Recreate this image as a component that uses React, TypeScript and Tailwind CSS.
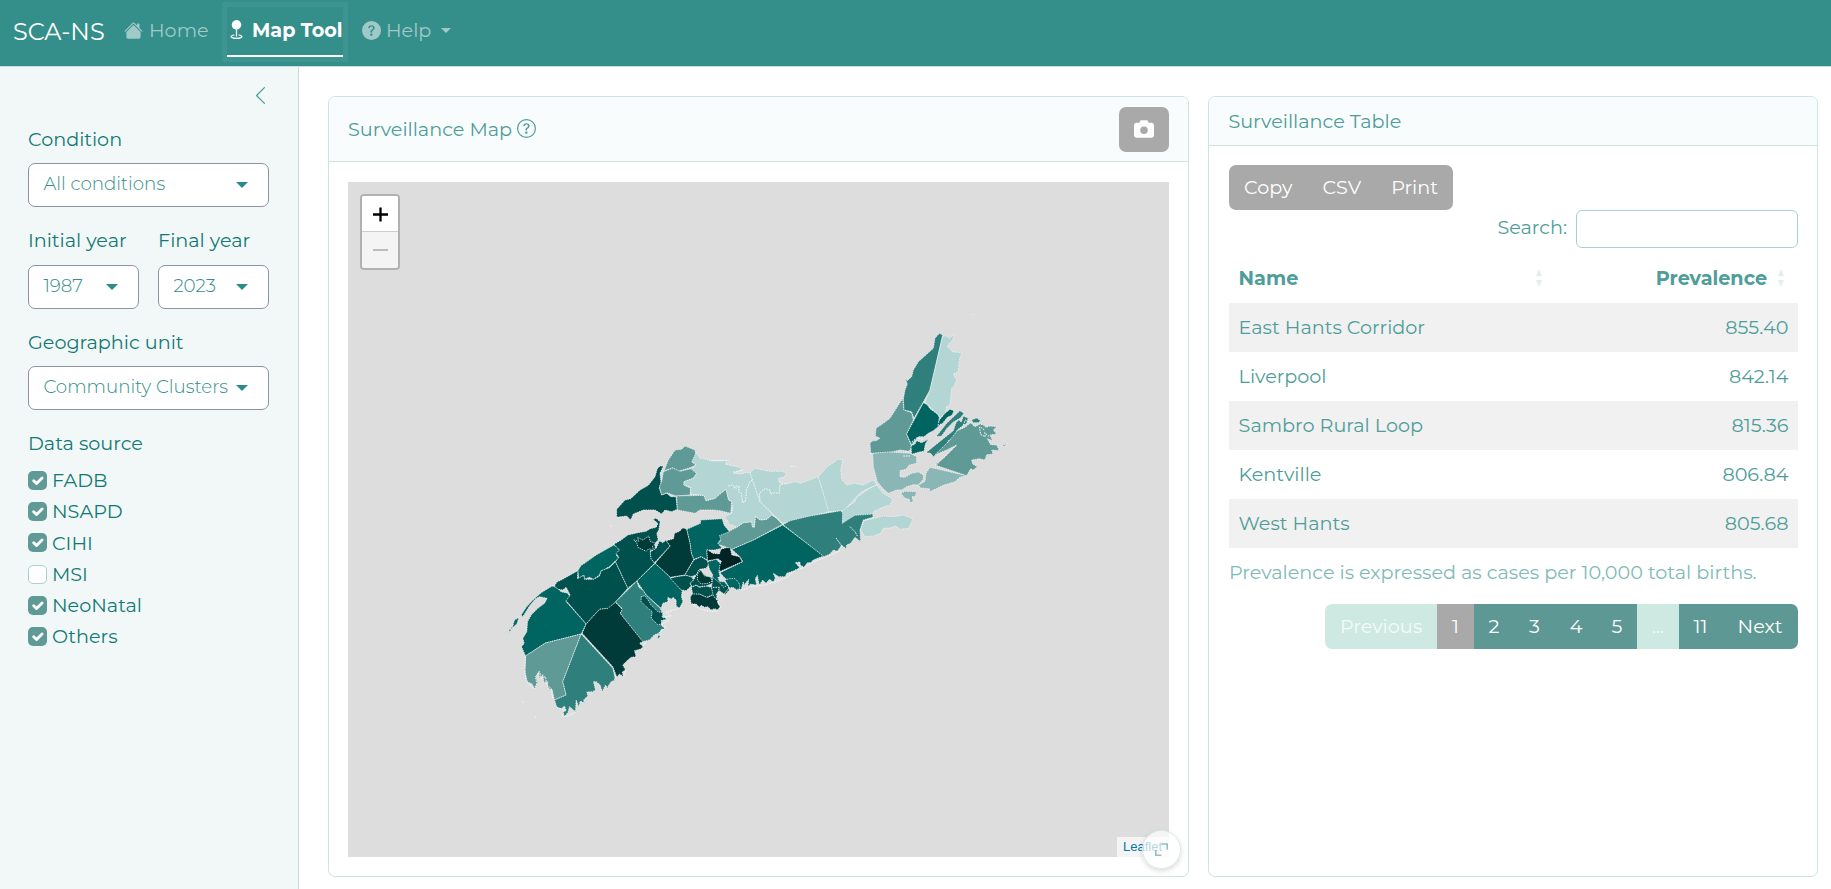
import React from "react";
import { BsHouseFill, BsGeoFill, BsQuestionCircleFill, BsQuestionCircle, BsChevronLeft } from "react-icons/bs";
import { FaCamera } from "react-icons/fa6";

type Shape = [string, string];

const C1 = "#b3d5d3";
const C2 = "#8ab6b5";
const C3 = "#5f9a97";
const C4 = "#2f7f7c";
const C5 = "#006461";
const C6 = "#00504d";
const C7 = "#003b39";
const C8 = "#002424";

const north: Shape[] = [
  [C5, "548,285 672,378 655,384 640,390 632,398 622,398 612,412 600,404 600,396 586,398 598,412 590,420 578,424 560,430 556,440 536,440 520,430 526,444 520,456 508,448 498,460 488,450 478,466 472,436 466,446 470,466 452,462 444,470 446,448 432,466 430,455 424,478 412,480 404,470 396,474 392,455 375,445 360,428 428,395 420,380 395,358 460,330"],
  [C3, "548,283 460,330 395,358 380,352 352,342 362,332 356,320 368,308 385,305 410,292 430,278 455,275 457,290 463,292 466,258 480,270 500,268 515,255 530,264"],
  [C6, "50,262 50,238 75,210 92,206 120,180 145,166 165,140 172,116 180,108 190,108 180,130 183,160 178,175 185,195 200,190 212,200 228,200 232,238 215,245 195,240 185,252 165,240 130,240 100,252 92,270 80,258"],
  [C3, "192,122 205,90 225,60 245,58 255,48 270,54 285,60 288,75 276,95 288,105 268,114 235,124 218,114"],
  [C3, "190,125 218,114 240,124 278,115 290,130 280,145 252,155 252,165 272,175 270,195 228,198 200,188 185,195 178,170 185,155"],
  [C3, "230,198 312,196 318,212 345,205 360,190 378,178 386,210 395,215 392,250 360,242 340,240 300,240 285,250 232,240"],
  [C1, "288,68 300,85 310,85 330,92 385,92 375,102 400,108 420,112 425,118 400,130 425,132 436,128 450,128 460,155 480,215 548,283 530,264 515,255 500,268 480,270 466,258 463,292 457,290 455,275 430,278 410,292 395,284 388,285 382,270 372,262 395,250 398,238 395,215 386,210 378,178 345,205 318,212 312,196 272,192 272,172 252,165 252,155 280,145 290,130 275,118 288,105 276,95"],
  [C1, "450,128 458,120 465,115 510,124 545,124 558,128 555,140 535,145 538,158 560,162 585,155 600,160 655,140 688,245 548,280 480,215"],
  [C1, "655,140 682,110 715,88 728,90 722,120 726,150 740,165 760,160 790,165 820,150 830,165 805,175 785,185 770,200 730,243 686,245"],
  [C1, "830,165 850,190 870,202 878,208 870,225 848,232 820,245 820,258 790,256 760,260 740,272 730,280 725,243 765,215 770,202 805,178"],
  [C4, "549,284 570,272 630,258 723,242 728,250 727,280 745,268 765,256 820,252 818,262 790,270 780,300 782,335 765,322 752,340 740,345 738,356 725,346 712,364 700,360 690,372 672,380"],
  [C1, "782,300 792,272 850,258 880,260 910,255 938,266 934,280 925,295 900,298 888,288 870,294 850,295 842,310 820,318 795,320"],
];

const south: Shape[] = [
  [C5, "28,392 40,378 45,360 56,354 60,348 52,372 35,386 30,398"],
  [C5, "158,258 170,262 185,275 205,280 212,292 200,305 260,372 245,402 138,429 78,468 66,440 74,430 70,415 82,395 84,365 95,345 115,325 135,310 143,295 120,290 108,296 90,318 70,350 65,345 80,322 100,300 125,278"],
  [C5, "235,212 245,196 255,190 290,165 343,135 352,140 360,150 350,165 358,175 345,185 330,200 322,204 315,210 305,212 300,225 282,238 270,232 255,238 253,225 238,236"],
  [C6, "165,258 172,246 185,240 235,212 234,236 253,226 255,238 282,238 300,228 305,212 330,203 348,185 385,265 348,306 330,325 300,328 260,372 200,302 212,285 200,262 190,270 175,268"],
  [C6, "343,133 365,120 385,105 415,98 440,94 452,86 470,82 475,70 460,58 470,55 482,65 478,90 472,100 476,120 466,130 468,150 452,152 455,175 465,190 412,243 385,265 348,185 358,172 350,160 360,150"],
  [C7, "403,120 418,124 414,112 430,120 448,108 452,124 468,130 458,140 464,152 448,146 440,154 415,142 412,128"],
  [C6, "452,156 470,145 480,122 490,128 500,120 512,138 465,188 455,178"],
  [C7, "512,138 500,122 522,116 525,100 540,94 550,83 562,88 572,130 576,160 583,178 556,225 512,232 467,190"],
  [C5, "562,88 603,70 603,60 668,56 674,76 690,95 660,107 664,118 655,130 668,145 645,150 622,150 624,180 605,170 583,178 576,160 572,130"],
  [C8, "622,148 640,160 660,162 664,148 680,143 692,143 697,165 720,170 728,185 660,215 657,200 666,184 655,176 640,180 624,182"],
  [C6, "583,180 605,170 624,182 630,190 620,205 600,208 590,225 575,230 556,225"],
  [C5, "467,190 512,232 548,272 546,290 550,305 540,325 530,318 530,300 520,292 516,298 505,292 505,305 490,310 485,325 440,285 412,243"],
  [C6, "512,235 530,230 560,226 578,232 582,240 572,250 575,258 560,272 545,270"],
  [C4, "412,243 418,262 430,270 440,285 482,325 490,340 485,375 498,388 486,388 478,402 465,404 450,420 428,425 362,340 368,325 348,306"],
  [C6, "425,290 436,287 446,300 455,315 475,335 490,338 488,352 506,356 484,362 488,372 475,374 455,355 458,335 440,320 425,305"],
  [C7, "248,400 260,372 300,328 325,325 348,307 368,328 362,340 430,425 420,430 432,440 422,448 405,452 410,470 395,472 385,480 370,495 378,510 368,516 372,530 360,522 352,532 340,500"],
  [C3, "78,468 138,429 245,402 190,545 200,585 165,600 158,570 150,568 144,558 145,545 134,548 130,524 120,535 118,515 110,530 115,548 105,568 98,552 82,545 76,510"],
  [C4, "245,402 340,505 348,540 335,545 325,560 326,568 318,555 308,575 302,555 290,545 282,545 288,570 280,575 262,576 265,588 252,600 256,608 242,604 238,622 230,600 228,635 210,620 206,636 195,650 190,635 200,632 195,618 185,626 172,622 165,600 200,585 190,545"],
  [C7, "572,292 580,280 600,282 625,292 640,284 655,300 655,310 662,320 655,330 645,326 635,330 625,320 615,322 605,316 600,322 590,312 575,312"],
  [C6, "575,262 590,256 600,262 620,258 635,262 640,274 655,285 640,284 622,292 600,282 580,282"],
  [C6, "590,225 600,208 612,222 625,232 640,232 640,250 620,258 600,260 590,255 578,260 572,250 582,240"],
  [C7, "594,222 604,210 615,228 630,230 640,242 625,250 605,252 594,240"],
  [C5, "624,185 650,178 662,190 658,215 662,230 655,232 660,244 676,246 690,265 680,280 664,268 652,270 645,245 636,240 640,225 630,208"],
  [C6, "640,232 660,248 672,262 684,256 690,270 676,284 660,272 650,282 655,298 642,290 636,262"],
  [C5, "676,240 690,236 706,236 718,248 722,262 712,270 700,262 690,264"],
  [C4, "474,408 480,404 482,412 474,416"],
];

const breton: Shape[] = [
  [C2, "68,430 110,425 180,430 200,440 200,460 178,465 168,478 150,482 150,500 165,502 185,490 205,486 220,495 220,508 205,525 190,524 170,530 155,540 140,540 115,550 98,535 82,515 70,470"],
  [C2, "152,550 165,544 200,545 195,560 186,560 190,575 180,578 178,568 165,565"],
  [C2, "205,526 225,514 228,490 240,472 350,497 330,502 315,515 280,526 240,545 238,536 212,534"],
  [C3, "62,430 60,400 68,392 78,392 90,385 76,378 78,355 100,340 120,325 158,265 162,300 185,308 190,330 170,372 185,410 178,424 150,420 130,425"],
  [C4, "160,268 165,240 172,222 166,206 172,212 185,200 190,180 205,155 250,115 255,85 268,70 278,75 240,240 192,325 185,305 162,300"],
  [C1, "278,78 290,78 298,85 312,73 308,90 298,100 292,110 300,115 306,125 335,128 328,150 325,185 310,192 320,210 312,230 305,235 300,285 290,290 286,308 272,322 225,275 240,240"],
  [C5, "220,278 232,284 240,296 262,312 268,322 266,335 270,345 250,362 235,370 222,380 205,380 190,396 185,405 170,372"],
  [C5, "183,408 195,402 200,392 215,398 235,388 226,402 222,424 208,426 185,433"],
  [C5, "264,346 268,330 285,310 300,298 312,302 306,316 292,322 278,340"],
  [C4, "258,380 290,340 330,302 342,310 330,325 310,336 290,356 275,378"],
  [C4, "228,428 260,402 310,362 318,338 326,330 334,336 340,318 355,325 350,340 340,346 322,360 310,385 295,392 290,402 270,425 250,440 242,430"],
  [C4, "364,330 380,324 392,332 385,338 370,338"],
  [C3, "255,465 285,440 320,405 290,420 255,434 275,415 298,392 322,362 345,352 362,338 375,350 390,342 400,345 408,352 420,348 440,350 430,360 440,372 420,375 428,392 412,386 422,404 440,405 448,422 425,420 430,432 410,434 405,450 388,446 365,450 368,462 382,470 370,480 362,476 350,497"],
  [C3, "455,406 472,402 462,409"],
  [C1, "368,14 376,16 370,22"],
];

const southCoast =
  "M78,470 76,520 84,548 104,566 112,552 108,530 120,515 126,535 138,530 142,555 156,566 160,598 M172,622 194,630 188,648 200,650 230,636 M345,540 350,528 M372,530 380,508 M430,440 436,428 M470,404 488,392 500,382 484,372 508,362 495,350 515,348 500,336 530,328 545,322 M578,312 600,326 620,332 650,334 664,322 650,296 660,284 M640,262 660,262 656,276 672,284 690,262 M108,650 110,656 M70,604 72,610 M333,78 337,79";

const northCoast =
  "M335,92 H385 M400,126 430,120 M572,109 H590 M411,166 398,176 M385,168 398,165 408,175 418,168 416,185 424,190 428,218 436,215 440,178 450,155 458,150 M480,212 478,190 495,176 510,180 512,192 525,188 538,190 540,165 556,160 M400,474 430,480 450,470 490,466 525,456 565,440 585,420 610,414 632,400 660,388 690,376 720,362 M708,324 728,352 M750,290 765,305 772,318";

const bretonCoast =
  "M160,438 H180 M185,396 200,384 222,388 M388,350 392,374 406,380 404,368 418,380 M392,352 404,360 M258,466 320,404 M340,346 346,330 362,338";

function Region({ x, y, shapes, coast }: { x: number; y: number; shapes: Shape[]; coast: string }) {
  return (
    <g transform={`translate(${x} ${y}) scale(0.33333)`}>
      {shapes.map(([fill, pts], i) => (
        <polygon key={i} points={pts} fill={fill} stroke="#f4f8f8" strokeOpacity="0.85" strokeWidth="2.8" strokeDasharray="4 3" />
      ))}
      <path d={coast} fill="none" stroke="#f4f8f8" strokeWidth="3" strokeDasharray="5 3" />
    </g>
  );
}

function NovaScotia() {
  return (
    <svg viewBox="0 0 821 675" className="block h-full w-full">
      <Region x={252} y={248} shapes={north} coast={northCoast} />
      <Region x={151.5} y={318} shapes={south} coast={southCoast} />
      <Region x={502} y={128} shapes={breton} coast={bretonCoast} />
    </svg>
  );
}

function Select({ value }: { value: string }) {
  return (
    <div className="flex h-[44px] w-full items-center justify-between rounded-[7px] border border-[#8d93a1] bg-white pl-[14.4px] pr-[20px]">
      <span className="whitespace-nowrap pb-[2px] text-[18.24px] font-light text-[#348e8a]">{value}</span>
      <svg viewBox="0 0 12 6" className="h-[6px] w-[12px] shrink-0 text-[#2a8c87]">
        <path d="M0 0H12L6 6Z" fill="currentColor" />
      </svg>
    </div>
  );
}

const sources = [
  { name: "FADB", on: true },
  { name: "NSAPD", on: true },
  { name: "CIHI", on: true },
  { name: "MSI", on: false },
  { name: "NeoNatal", on: true },
  { name: "Others", on: true },
];

function Sidebar() {
  return (
    <aside className="flex w-[299px] shrink-0 flex-col border-r border-[#c5dedd] bg-[#f2f8f8] pl-[28px] pr-[29px] text-[#127a75]">
      <div className="flex h-[58px] justify-end pt-[18px]">
        <BsChevronLeft className="-mr-[2px] h-[21px] w-[21px] text-[#4f9d9a]" />
      </div>
      <div className="h-[38px] leading-[28px]">Condition</div>
      <Select value="All conditions" />
      <div className="mt-[18px] flex gap-[19px]">
        <div className="flex-1">
          <div className="h-[40px] whitespace-nowrap pt-[1px] leading-[28px]">Initial year</div>
          <Select value="1987" />
        </div>
        <div className="flex-1">
          <div className="h-[40px] whitespace-nowrap pt-[1px] leading-[28px]">Final year</div>
          <Select value="2023" />
        </div>
      </div>
      <div className="mt-[19px] h-[38px] leading-[28px]">Geographic unit</div>
      <Select value="Community Clusters" />
      <div className="mt-[19px] h-[36px] leading-[28px]">Data source</div>
      <div className="flex flex-col">
        {sources.map((s) => (
          <label key={s.name} className="flex h-[31.2px] items-center gap-[5px]">
            <span
              className={
                s.on
                  ? "flex h-[19px] w-[19px] items-center justify-center rounded-[5px] bg-[#5f9a97]"
                  : "h-[19px] w-[19px] rounded-[5px] border border-[#a9d0d0] bg-white"
              }
            >
              {s.on && (
                <svg viewBox="0 0 20 20" className="h-[19px] w-[19px]">
                  <path d="M6 10.2l3 3 5.8-5.8" fill="none" stroke="#fff" strokeWidth="3" strokeLinecap="round" strokeLinejoin="round" />
                </svg>
              )}
            </span>
            <span>{s.name}</span>
          </label>
        ))}
      </div>
    </aside>
  );
}

const rows = [
  ["East Hants Corridor", "855.40"],
  ["Liverpool", "842.14"],
  ["Sambro Rural Loop", "815.36"],
  ["Kentville", "806.84"],
  ["West Hants", "805.68"],
];

function Sort() {
  return (
    <svg viewBox="0 0 8 18" className="h-[18px] w-[8px]" fill="#e2efef">
      <path d="M4 0L7 7H1ZM4 18L7 11H1Z" />
    </svg>
  );
}

const pages = [
  { t: "Previous", c: "w-[112px] bg-[#cde9e1] text-[#f4fbf9]" },
  { t: "1", c: "w-[37px] bg-[#a9a9a9] text-white" },
  { t: "2", c: "w-[40px] bg-[#5d9894] text-white" },
  { t: "3", c: "w-[41px] bg-[#5d9894] text-white" },
  { t: "4", c: "w-[42px] bg-[#5d9894] text-white" },
  { t: "5", c: "w-[40px] bg-[#5d9894] text-white" },
  { t: "...", c: "w-[42px] bg-[#cde9e1] text-[#f4fbf9]" },
  { t: "11", c: "w-[43px] bg-[#5d9894] text-white" },
  { t: "Next", c: "w-[76px] bg-[#5d9894] text-white" },
];

function TableCard() {
  return (
    <section className="flex h-[781px] w-[610px] flex-col overflow-hidden rounded-[7px] border border-[#cde4e3] bg-white text-[#4f9d9a]">
      <header className="flex h-[49px] items-center border-b border-[#cde4e3] bg-[#f8fcfc] px-[19.4px]">Surveillance Table</header>
      <div className="pl-[20px] pr-[19px] pt-[19px]">
        <div className="flex h-[45px] w-[224px] items-center justify-between rounded-[7px] bg-[#a9a9a9] px-[15px] text-white">
          <span>Copy</span>
          <span>CSV</span>
          <span>Print</span>
        </div>
        <div className="flex items-center justify-end gap-[9px]">
          <span className="pb-[3px]">Search:</span>
          <div className="h-[38px] w-[222px] rounded-[6px] border border-[#a9d0d0] bg-white" />
        </div>
        <div className="flex h-[55px] items-center pt-[6px] font-bold">
          <div className="flex w-[324px] items-center justify-between pl-[9.6px] pr-[10px]">
            <span>Name</span>
            <Sort />
          </div>
          <div className="flex flex-1 items-center justify-end gap-[10px] pr-[13px]">
            <span>Prevalence</span>
            <Sort />
          </div>
        </div>
        {rows.map(([n, v], i) => (
          <div key={n} className={`flex h-[49.1px] items-center justify-between px-[9.6px] pb-px ${i % 2 === 0 ? "bg-[#f1f1f1]" : "bg-white"}`}>
            <span>{n}</span>
            <span>{v}</span>
          </div>
        ))}
        <div className="flex h-[55.5px] items-center whitespace-nowrap pb-[8px] text-[#80bab7]">Prevalence is expressed as cases per 10,000 total births.</div>
        <div className="flex justify-end">
          <div className="flex h-[45px] overflow-hidden rounded-[7px]">
            {pages.map((p) => (
              <div key={p.t} className={`flex items-center justify-center ${p.c}`}>
                {p.t}
              </div>
            ))}
          </div>
        </div>
      </div>
    </section>
  );
}

function MapCard() {
  return (
    <section className="relative flex h-[781px] w-[861px] flex-col rounded-[7px] border border-[#cde4e3] bg-white">
      <header className="flex h-[65px] items-center justify-between rounded-t-[6px] border-b border-[#cde4e3] bg-[#f8fcfc] px-[19px] text-[#4f9d9a]">
        <div className="flex items-center gap-[5px]">
          <span className="pt-[1px]">Surveillance Map</span>
          <BsQuestionCircle className="h-[19px] w-[19px]" />
        </div>
        <div className="flex h-[45px] w-[50px] items-center justify-center rounded-[7px] bg-[#a9a9a9]">
          <FaCamera className="h-[20px] w-[20px] text-white" />
        </div>
      </header>
      <div className="relative ml-[19px] mt-[20px] h-[675px] w-[821px] bg-[#ddd]">
        <NovaScotia />
        <div className="absolute left-[12px] top-[12px] flex h-[76px] w-[40px] flex-col overflow-hidden rounded-[4px] border-2 border-[#b1b1b1]">
          <div className="flex h-[36px] items-center justify-center border-b border-[#ccc] bg-white pt-px">
            <svg viewBox="0 0 15 15" className="h-[15px] w-[15px]">
              <path d="M0 7.5H15M7.5 0.5V14.5" stroke="#000" strokeWidth="2.3" />
            </svg>
          </div>
          <div className="flex flex-1 items-center justify-center bg-[#f4f4f4]">
            <div className="h-[2px] w-[15px] bg-[#bbb]" />
          </div>
        </div>
        <div className="absolute bottom-0 right-0 flex h-[20px] w-[52px] items-center bg-[#f4f4f4] pl-[6px] font-['Liberation_Sans',Arial,sans-serif] text-[13px] text-[#0078a8]">
          Leaflet
        </div>
      </div>
      <div className="absolute bottom-[7px] right-[7px] flex h-[39px] w-[39px] items-center justify-center rounded-full border border-[#dbe9e8] bg-white/70 shadow-[0_2px_5px_rgba(0,0,0,0.15)]">
        <svg viewBox="0 0 13 13" className="h-[13px] w-[13px]" fill="none" stroke="#8fc0be" strokeWidth="1.6">
          <path d="M6.5 1H12.2V6.5M0.8 7V12.2H6.5" />
        </svg>
      </div>
    </section>
  );
}

export default function App() {
  return (
    <div className="flex h-[889px] w-[1831px] flex-col overflow-hidden bg-white font-['Montserrat',Inter,sans-serif] text-[19.2px]">
      <nav className="flex h-[67px] shrink-0 items-start border-b border-[#c5dedd] bg-[#348e8a] pl-[13px] text-white">
        <div className="w-[111px] pt-[14px] text-[24px] leading-[36px]">SCA-NS</div>
        <div className="flex w-[103px] items-center gap-[6px] pt-[16px] leading-[28px] text-[#a0cac8]">
          <BsHouseFill className="h-[19px] w-[19px]" />
          <span>Home</span>
        </div>
        <div className="flex h-[62px] w-[116px] flex-col">
          <div className="-ml-[5px] mt-[2px] flex h-[60px] w-[126px] items-start border-[5px] border-[#3e9490]">
            <div className="flex h-[50px] w-full items-start gap-[6px] whitespace-nowrap border-b-2 border-white pt-[9px] font-bold leading-[28px]">
              <BsGeoFill className="mt-[4px] h-[19px] w-[19px] shrink-0" />
              <span>Map Tool</span>
            </div>
          </div>
        </div>
        <div className="ml-[19px] flex items-center gap-[5px] pt-[16px] leading-[28px] text-[#a0cac8]">
          <BsQuestionCircleFill className="h-[19px] w-[19px]" />
          <span>Help</span>
          <svg viewBox="0 0 10 5" className="ml-[5px] h-[5px] w-[10px]">
            <path d="M0 0H10L5 5Z" fill="currentColor" />
          </svg>
        </div>
      </nav>
      <div className="flex flex-1">
        <Sidebar />
        <main className="flex flex-1 gap-[19px] pl-[29px] pt-[29px]">
          <MapCard />
          <TableCard />
        </main>
      </div>
    </div>
  );
}
